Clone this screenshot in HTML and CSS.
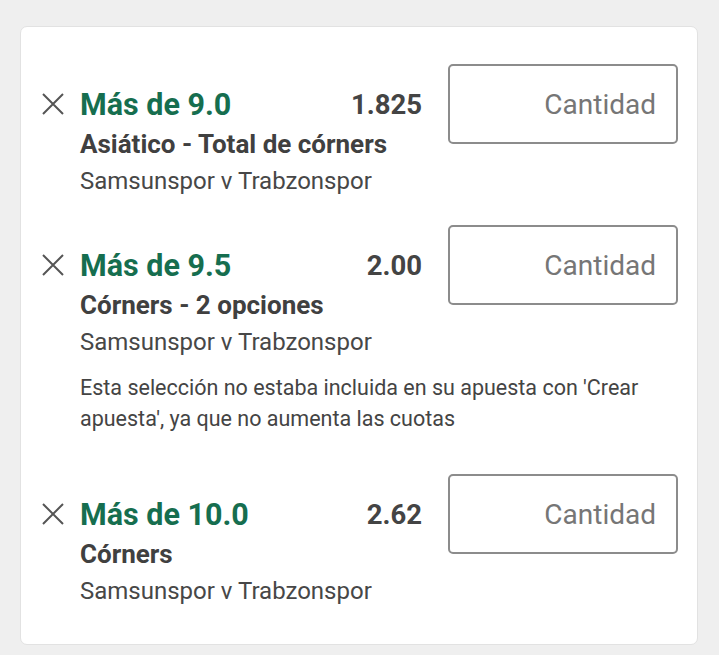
FILE: index.html
```html
<!DOCTYPE html>
<html lang="es">
<head>
<meta charset="utf-8">
<link rel="stylesheet" href="styles.css">
</head>
<body>
<div class="card">
  <div class="bet">
    <button class="remove" aria-label="Quitar">
      <svg viewBox="0 0 22 22" width="22" height="22"><path d="M1 1 L21 21 M21 1 L1 21" stroke="#555" stroke-width="2" fill="none"/></svg>
    </button>
    <div class="title">Más de 9.0</div>
    <div class="odds">1.825</div>
    <div class="stake"><span>Cantidad</span></div>
    <div class="market">Asiático - Total de córners</div>
    <div class="event">Samsunspor v Trabzonspor</div>
  </div>
  <div class="bet">
    <button class="remove" aria-label="Quitar">
      <svg viewBox="0 0 22 22" width="22" height="22"><path d="M1 1 L21 21 M21 1 L1 21" stroke="#555" stroke-width="2" fill="none"/></svg>
    </button>
    <div class="title">Más de 9.5</div>
    <div class="odds">2.00</div>
    <div class="stake"><span>Cantidad</span></div>
    <div class="market">Córners - 2 opciones</div>
    <div class="event">Samsunspor v Trabzonspor</div>
    <div class="note">Esta selección no estaba incluida en su apuesta con 'Crear apuesta', ya que no aumenta las cuotas</div>
  </div>
  <div class="bet">
    <button class="remove" aria-label="Quitar">
      <svg viewBox="0 0 22 22" width="22" height="22"><path d="M1 1 L21 21 M21 1 L1 21" stroke="#555" stroke-width="2" fill="none"/></svg>
    </button>
    <div class="title">Más de 10.0</div>
    <div class="odds">2.62</div>
    <div class="stake"><span>Cantidad</span></div>
    <div class="market">Córners</div>
    <div class="event">Samsunspor v Trabzonspor</div>
  </div>
</div>
</body>
</html>
```

FILE: styles.css
```css
* { box-sizing: border-box; }
html, body {
  margin: 0;
  padding: 0;
  background: #efefef;
  font-family: Roboto, "Liberation Sans", sans-serif;
}
body {
  padding: 26px 21px 12px 20px;
}
.card {
  background: #fff;
  border: 1px solid #e2e2e2;
  border-radius: 7px;
  padding: 57px 19px 36px 21px;
  display: flex;
  flex-direction: column;
  gap: 47px;
}
.bet {
  display: grid;
  grid-template-columns: 38px 1fr auto 230px;
  grid-template-rows: 40px 39px 35px auto;
  column-gap: 0;
  align-items: center;
}
.remove {
  grid-column: 1;
  grid-row: 1;
  background: none;
  border: 0;
  padding: 0;
  width: 22px;
  height: 22px;
  display: flex;
  align-items: center;
  justify-content: center;
  cursor: pointer;
}
.remove svg { display: block; }
.title {
  grid-column: 2;
  grid-row: 1;
  font-size: 30.5px;
  font-weight: 700;
  color: #166e4f;
  white-space: nowrap;
}
.odds {
  grid-column: 3;
  grid-row: 1;
  font-size: 27.5px;
  font-weight: 700;
  color: #444;
  text-align: right;
  padding-right: 26px;
}
.stake {
  grid-column: 4;
  grid-row: 1;
  height: 80px;
  border: 2px solid #8c8c8c;
  border-radius: 5px;
  display: flex;
  align-items: center;
  justify-content: flex-end;
  padding-right: 20px;
  font-size: 28px;
  color: #767676;
}
.market {
  grid-column: 2 / 4;
  grid-row: 2;
  font-size: 26px;
  font-weight: 700;
  color: #404040;
  white-space: nowrap;
}
.event {
  grid-column: 2 / 4;
  grid-row: 3;
  font-size: 24px;
  color: #474747;
  white-space: nowrap;
}
.note {
  grid-column: 2 / 5;
  grid-row: 4;
  font-size: 21.5px;
  line-height: 31px;
  color: #444;
  padding-top: 13px;
  padding-bottom: 13px;
}
```
